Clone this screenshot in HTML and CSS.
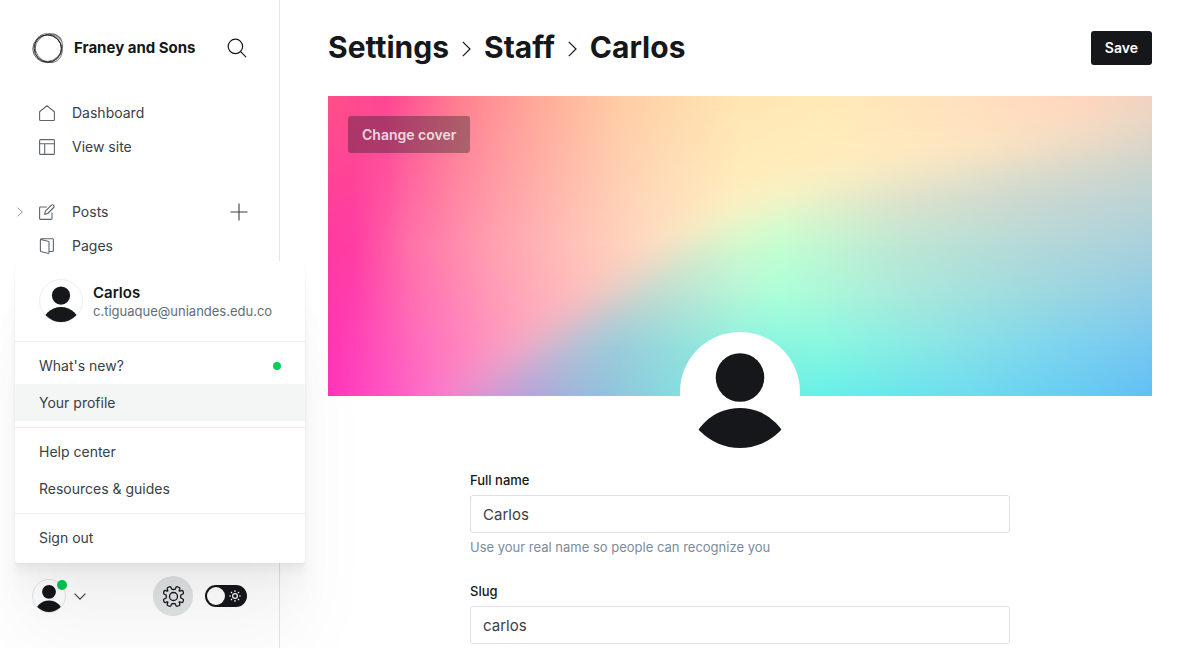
FILE: index.html
```html
<!DOCTYPE html>
<html lang="en">
<head>
<meta charset="utf-8">
<meta name="viewport" content="width=device-width, initial-scale=1">
<title>Settings - Staff - Carlos</title>
<link rel="stylesheet" href="styles.css">
</head>
<body>
<svg class="sprite" aria-hidden="true">
  <symbol id="person" viewBox="0 0 112 112">
    <clipPath id="person-clip"><circle cx="56" cy="56" r="56"/></clipPath>
    <g clip-path="url(#person-clip)" fill="#15171a"><circle cx="56" cy="41.5" r="24.3"/><circle cx="56" cy="122.8" r="50.8"/></g>
  </symbol>
</svg>
<div class="app">
  <aside class="sidebar">
    <header class="site">
      <svg class="site-logo" viewBox="0 0 32 32" fill="none" stroke="#222">
        <circle cx="15.700" cy="16.500" r="13.600" stroke-width=".9"/>
        <ellipse cx="15.200" cy="16.800" rx="14.400" ry="13.800" stroke-width=".9" opacity=".8"/>
        <ellipse cx="16.800" cy="15.600" rx="14.800" ry="12.800" transform="rotate(-45 16.800 15.600)" stroke-width=".8" opacity=".7"/>
        <ellipse cx="16.600" cy="16.200" rx="15.200" ry="13" transform="rotate(55 16.600 16.200)" stroke-width=".8" opacity=".7"/>
        <path d="M15 1.900Q24-.5 29.600 6.600L30 11Q25.500 3 15 1.900zM30.300 14Q30.500 24.500 20 30.200L16 31Q27.500 27 30.300 14zM2 14Q4 5 12 2.800L9 3Q2 7 1.600 16z" fill="#555" stroke="none" opacity=".5"/>
      </svg>
      <span class="site-name">Franey and Sons</span>
      <button class="icon-button" type="button" aria-label="Search">
        <svg class="icon-search" viewBox="0 0 20 20" fill="none" stroke="#15171a" stroke-width="1.2" stroke-linecap="round"><circle cx="8.4" cy="8.4" r="7.2"/><path d="M13.6 13.6 18.8 18.8"/></svg>
      </button>
    </header>
    <nav class="nav">
      <ul class="nav-group">
        <li class="nav-row"><a class="nav-link" href="#dashboard">
          <svg class="icon" viewBox="0 0 16 16"><path d="M.6 6.700 8 .8l7.400 5.900v8a.8.8 0 0 1-.8.8H1.400a.8.8 0 0 1-.8-.8z"/></svg>Dashboard</a></li>
        <li class="nav-row"><a class="nav-link" href="#site">
          <svg class="icon" viewBox="0 0 16 16"><rect x=".6" y=".6" width="14.8" height="14.8" rx="1"/><path d="M.6 4.800h14.800M5.700 4.800v10.600"/></svg>View site</a></li>
      </ul>
      <ul class="nav-group">
        <li class="nav-row">
          <button class="expand" type="button" aria-label="Expand posts"><svg class="icon-expand" viewBox="0 0 6 10"><path d="M.7.7 5.300 5 .7 9.300"/></svg></button>
          <a class="nav-link" href="#posts">
          <svg class="icon" viewBox="0 0 16 16"><path d="M7.500 3H1.400a.8.8 0 0 0-.8.8v10.800a.8.8 0 0 0 .8.8h10.800a.8.8 0 0 0 .8-.8V8.700"/><path d="m5.600 10.400.8-3.200 6-6a1.400 1.400 0 0 1 2 0l.3.300a1.400 1.400 0 0 1 0 2l-6 6z"/></svg>Posts</a>
          <button class="icon-button" type="button" aria-label="New post"><svg class="icon-add" viewBox="0 0 18 18"><path d="M9 .5v17M.5 9h17"/></svg></button></li>
        <li class="nav-row"><a class="nav-link" href="#pages">
          <svg class="icon" viewBox="0 0 16 16"><path d="M1.500 1.500 9 3.200a1.200 1.200 0 0 1 1 1.200v10a.9.9 0 0 1-1.100.9l-6.500-1.600a1.300 1.300 0 0 1-1-1.300V1.700c0-.6.400-1 1-1h11a1 1 0 0 1 1 1v10.800a1 1 0 0 1-1 1H10"/></svg>Pages</a></li>
      </ul>
    </nav>
    <footer class="sidebar-footer">
      <button class="account" type="button" aria-label="Account menu" aria-expanded="true">
        <span class="avatar avatar-small"><svg viewBox="0 0 112 112"><use href="#person"/></svg><span class="badge"></span></span>
        <svg class="icon-chevron" viewBox="0 0 12 7"><path d="M.6.6 6 6.200 11.400.6"/></svg>
      </button>
      <div class="tools">
        <a class="settings" href="#settings" aria-label="Settings">
          <svg class="icon-gear" viewBox="-10.500 -10.500 21 21"><circle r="4"/><path d="M-1.800-7.400-2.600-9.300Q-3.200-10-4-9.700L-5.700-9Q-6.500-8.500-6.300-7.600L-5.700-5.700Q-5.700-5.200-6.300-5.400L-8.200-6Q-9.200-6-9.500-5.200L-10-3.600Q-10-2.800-9.300-2.500L-7.400-1.500Q-7 0-7.400 1.500L-9.300 2.500Q-10 2.800-10 3.600L-9.500 5.200Q-9.200 6-8.200 6L-6.300 5.400Q-5.700 5.200-5.700 5.700L-6.300 7.600Q-6.500 8.500-5.700 9L-4 9.700Q-3.200 10-2.600 9.300L-1.800 7.400Q0 6.600 1.800 7.400L2.600 9.300Q3.200 10 4 9.700L5.700 9Q6.500 8.500 6.300 7.600L5.700 5.700Q5.700 5.200 6.300 5.400L8.200 6Q9.200 6 9.500 5.200L10 3.600Q10 2.800 9.300 2.500L7.400 1.500Q7 0 7.400-1.500L9.300-2.500Q10-2.800 10-3.600L9.500-5.200Q9.200-6 8.200-6L6.300-5.400Q5.700-5.200 5.700-5.700L6.300-7.600Q6.500-8.500 5.700-9L4-9.700Q3.200-10 2.600-9.300L1.800-7.400Q0-6.600-1.800-7.400z"/></svg>
        </a>
        <label class="night">
          <input class="night-input" type="checkbox" aria-label="Night mode">
          <svg class="icon-sun" viewBox="-6 -6 12 12"><circle r="2.400"/><path d="M0-5.800v1.800M0 5.800V4M-5.800 0H-4M5.800 0H4M-4.100-4.100l1.200 1.200M4.100 4.100 2.900 2.900M-4.100 4.100l1.200-1.200M4.100-4.100 2.900-2.900"/></svg>
        </label>
      </div>
      <div class="menu">
        <div class="menu-user">
          <span class="avatar avatar-medium"><svg viewBox="0 0 112 112"><use href="#person"/></svg></span>
          <div class="menu-identity"><strong class="menu-name">Carlos</strong><span class="menu-email">c.tiguaque@uniandes.edu.co</span></div>
        </div>
        <div class="menu-group">
          <a class="menu-item" href="#new">What's new?<span class="dot"></span></a>
          <a class="menu-item is-active" href="#profile">Your profile</a>
        </div>
        <div class="menu-group">
          <a class="menu-item" href="#help">Help center</a>
          <a class="menu-item" href="#resources">Resources &amp; guides</a>
        </div>
        <div class="menu-group">
          <a class="menu-item" href="#signout">Sign out</a>
        </div>
      </div>
    </footer>
  </aside>
  <main class="main">
    <header class="page-header">
      <h1 class="title">
        <a href="#settings">Settings</a>
        <svg class="crumb" viewBox="0 0 9 16"><path d="M.8.8 8 8 .8 15.200"/></svg>
        <a href="#staff">Staff</a>
        <svg class="crumb" viewBox="0 0 9 16"><path d="M.8.8 8 8 .8 15.200"/></svg>
        <span>Carlos</span>
      </h1>
      <button class="save" type="button">Save</button>
    </header>
    <section class="cover">
      <svg class="cover-art" viewBox="0 0 824 300" preserveAspectRatio="none" aria-hidden="true">
        <defs>
          <linearGradient id="w0"><stop offset="0" stop-color="#ff5088"/><stop offset=".07" stop-color="#ff4693"/><stop offset=".16" stop-color="#ff8090"/><stop offset=".25" stop-color="#ffa898"/><stop offset=".36" stop-color="#ffcfa5"/><stop offset=".5" stop-color="#ffe6b2"/><stop offset=".6" stop-color="#ffeab7"/><stop offset=".78" stop-color="#ffe0bf"/><stop offset=".92" stop-color="#ffd6bf"/><stop offset="1" stop-color="#f3d3c0"/></linearGradient>
          <linearGradient id="w1"><stop offset="0" stop-color="#ff3aa0"/><stop offset=".03" stop-color="#ff3ca3"/><stop offset=".1" stop-color="#ff72a8"/><stop offset=".2" stop-color="#ffa0b0"/><stop offset=".3" stop-color="#ffc2b8"/><stop offset=".4" stop-color="#ffdec2"/><stop offset=".5" stop-color="#fff2c4"/><stop offset="1" stop-color="#fff2c4"/></linearGradient>
          <linearGradient id="w2"><stop offset="0" stop-color="#ff35bb"/><stop offset=".06" stop-color="#ff50c3"/><stop offset=".13" stop-color="#ff72c8"/><stop offset=".25" stop-color="#ffa4c6"/><stop offset=".4" stop-color="#ffd0c8"/></linearGradient>
          <linearGradient id="c0"><stop offset=".5" stop-color="#fff0c0"/><stop offset=".62" stop-color="#feedc0"/><stop offset=".75" stop-color="#f8e4c4"/><stop offset=".9" stop-color="#e4dac8"/><stop offset="1" stop-color="#d6d4ca"/></linearGradient>
          <linearGradient id="c1"><stop offset=".45" stop-color="#f8f2c6"/><stop offset=".55" stop-color="#ebf6c8"/><stop offset=".7" stop-color="#dfe2cb"/><stop offset=".85" stop-color="#cdd8d0"/><stop offset="1" stop-color="#bed4d4"/></linearGradient>
          <linearGradient id="c2"><stop offset=".35" stop-color="#e0d4c6"/><stop offset=".5" stop-color="#d0f8ce"/><stop offset=".55" stop-color="#c4fed1"/><stop offset=".7" stop-color="#bde6d4"/><stop offset=".85" stop-color="#b4d9d8"/><stop offset="1" stop-color="#a8d0dd"/></linearGradient>
          <linearGradient id="c3"><stop offset=".28" stop-color="#d4bccc"/><stop offset=".4" stop-color="#bcdcd2"/><stop offset=".5" stop-color="#b2f6d8"/><stop offset=".55" stop-color="#aaffd9"/><stop offset=".7" stop-color="#a8e9dc"/><stop offset=".85" stop-color="#9cdae0"/><stop offset="1" stop-color="#90cde6"/></linearGradient>
          <linearGradient id="c4"><stop offset=".22" stop-color="#d2aed2"/><stop offset=".35" stop-color="#9cccd9"/><stop offset=".5" stop-color="#8cf2df"/><stop offset=".6" stop-color="#88f8e0"/><stop offset=".75" stop-color="#88e4e6"/><stop offset=".9" stop-color="#7cd2ef"/><stop offset="1" stop-color="#76c8f0"/></linearGradient>
          <linearGradient id="c5"><stop offset=".14" stop-color="#e68ad0"/><stop offset=".25" stop-color="#b2a6da"/><stop offset=".33" stop-color="#92c0dc"/><stop offset=".45" stop-color="#80e4e0"/><stop offset=".6" stop-color="#66f0e8"/><stop offset=".78" stop-color="#6edbef"/><stop offset="1" stop-color="#62bff4"/></linearGradient>
          <linearGradient id="fade" x2="0" y2="1"><stop offset="0" stop-color="#fff" stop-opacity="0"/><stop offset="1" stop-color="#fff"/></linearGradient>
          <filter id="soften" filterUnits="userSpaceOnUse" x="-200" y="-200" width="1300" height="800" color-interpolation-filters="sRGB"><feGaussianBlur stdDeviation="20"/></filter>
          <mask id="m-w1" maskUnits="userSpaceOnUse" x="0" y="0" width="824" height="300"><rect width="824" height="150" fill="url(#fade)"/><rect y="150" width="824" height="150" fill="#fff"/></mask>
          <mask id="m-w2" maskUnits="userSpaceOnUse" x="0" y="0" width="824" height="300"><rect y="150" width="824" height="150" fill="url(#fade)"/></mask>
          <mask id="m-c1" maskUnits="userSpaceOnUse" x="0" y="0" width="824" height="300"><rect y="50" width="824" height="50" fill="url(#fade)"/><rect y="100" width="824" height="200" fill="#fff"/></mask>
          <mask id="m-c2" maskUnits="userSpaceOnUse" x="0" y="0" width="824" height="300"><rect y="100" width="824" height="50" fill="url(#fade)"/><rect y="150" width="824" height="150" fill="#fff"/></mask>
          <mask id="m-c3" maskUnits="userSpaceOnUse" x="0" y="0" width="824" height="300"><rect y="150" width="824" height="50" fill="url(#fade)"/><rect y="200" width="824" height="100" fill="#fff"/></mask>
          <mask id="m-c4" maskUnits="userSpaceOnUse" x="0" y="0" width="824" height="300"><rect y="200" width="824" height="50" fill="url(#fade)"/><rect y="250" width="824" height="50" fill="#fff"/></mask>
          <mask id="m-c5" maskUnits="userSpaceOnUse" x="0" y="0" width="824" height="300"><rect y="250" width="824" height="50" fill="url(#fade)"/></mask>
          <mask id="m-cool" maskUnits="userSpaceOnUse" x="0" y="0" width="824" height="300"><path d="M30 380 124 304 290 192 405 112 510 76 824 26 1000 0V500H30z" fill="#fff" filter="url(#soften)"/></mask>
        </defs>
        <rect width="824" height="300" fill="url(#w0)"/>
        <rect width="824" height="300" fill="url(#w1)" mask="url(#m-w1)"/>
        <rect width="824" height="300" fill="url(#w2)" mask="url(#m-w2)"/>
        <g mask="url(#m-cool)">
          <rect width="824" height="300" fill="url(#c0)"/>
          <rect width="824" height="300" fill="url(#c1)" mask="url(#m-c1)"/>
          <rect width="824" height="300" fill="url(#c2)" mask="url(#m-c2)"/>
          <rect width="824" height="300" fill="url(#c3)" mask="url(#m-c3)"/>
          <rect width="824" height="300" fill="url(#c4)" mask="url(#m-c4)"/>
          <rect width="824" height="300" fill="url(#c5)" mask="url(#m-c5)"/>
        </g>
      </svg>
      <button class="change-cover" type="button">Change cover</button>
    </section>
    <span class="avatar avatar-large"><svg viewBox="0 0 112 112"><use href="#person"/></svg></span>
    <form class="form">
      <div class="field">
        <label class="label" for="name">Full name</label>
        <input class="input" id="name" type="text" value="Carlos" aria-describedby="name-help">
        <p class="help" id="name-help">Use your real name so people can recognize you</p>
      </div>
      <div class="field">
        <label class="label" for="slug">Slug</label>
        <input class="input" id="slug" type="text" value="carlos">
      </div>
    </form>
  </main>
</div>
</body>
</html>
```

FILE: styles.css
```css
*, *::before, *::after { box-sizing: border-box; }
body {
  margin: 0;
  background: #fff;
  color: #394047;
  font-family: Inter, "Liberation Sans", sans-serif;
  font-size: 15px;
  line-height: 20px;
}
a { color: inherit; text-decoration: none; }
button { border: 0; padding: 0; background: none; color: inherit; font: inherit; cursor: pointer; }
svg { display: block; }
.sprite { position: absolute; width: 0; height: 0; }

.app { display: flex; min-height: 100vh; }

/* Sidebar */
.sidebar {
  display: flex;
  flex-direction: column;
  flex: 0 0 280px;
  border-right: 1px solid #e3e6e8;
}
.site {
  display: flex;
  align-items: center;
  gap: 10px;
  padding: 32px 32px 0;
}
.site-logo { width: 32px; height: 32px; flex: none; }
.site-name { flex: 1; color: #15171a; font-size: 15px; font-weight: 700; white-space: nowrap; }
.icon-button { display: grid; place-items: center; }
.icon-search { width: 20px; height: 20px; }
.nav { display: grid; gap: 31px; padding-top: 32px; font-size: 14px; }
.nav-group { margin: 0; padding: 0; list-style: none; }
.nav-row { position: relative; display: flex; align-items: center; height: 34px; padding: 0 31px 0 39px; }
.nav-link { display: flex; flex: 1; align-items: center; gap: 17px; }
.icon { width: 16px; height: 16px; fill: none; stroke: #5d666f; stroke-width: 1.1; stroke-linejoin: round; stroke-linecap: round; }
.expand { position: absolute; left: 17px; }
.icon-expand { width: 6px; height: 10px; fill: none; stroke: #8b98a3; }
.icon-add { width: 18px; height: 18px; fill: none; stroke: #394047; stroke-width: 1.1; }

.sidebar-footer {
  position: relative;
  display: flex;
  align-items: center;
  justify-content: space-between;
  margin-top: auto;
  padding: 0 32px 32px;
}
.account { display: flex; align-items: center; gap: 8px; }
.icon-chevron { width: 12px; height: 7px; fill: none; stroke: #394047; stroke-width: 1.1; }
.tools { display: flex; align-items: center; gap: 12px; }
.settings { display: grid; place-items: center; width: 40px; height: 40px; border-radius: 50%; background: #e1e5e6; }
.icon-gear { width: 21px; height: 21px; fill: none; stroke: #15171a; stroke-width: 1.3; stroke-linejoin: round; }
.night { position: relative; display: block; width: 42px; height: 22px; cursor: pointer; }
.night-input { display: flex; align-items: center; width: 100%; height: 100%; margin: 0; padding: 2px; border-radius: 11px; background: #15171a; appearance: none; cursor: pointer; }
.night-input::before { content: ""; width: 18px; height: 18px; border-radius: 50%; background: #fff; }
.icon-sun { position: absolute; top: 5px; right: 6px; width: 12px; height: 12px; fill: none; stroke: #fff; stroke-width: 1.2; pointer-events: none; }

.avatar { position: relative; display: block; flex: none; border-radius: 50%; background: #fff; }
.avatar svg { width: 100%; height: 100%; }
.avatar-small { width: 34px; height: 34px; border: 1px solid #e3e6e8; }
.avatar-medium { width: 44px; height: 44px; border: 1px solid #eceef0; }
.avatar-large { width: 120px; height: 120px; margin: -64px auto 0; padding: 4px; }
.badge { position: absolute; top: 0; right: -2px; width: 10px; height: 10px; border-radius: 50%; background: #00c853; }

/* Account menu */
.menu {
  position: absolute;
  z-index: 2;
  bottom: 85px;
  left: 15px;
  width: 290px;
  padding-bottom: 1px;
  border-radius: 3px;
  background: #fff;
  box-shadow:
    0 0 1px rgba(0, 0, 0, .1),
    0 3px 3px rgba(0, 0, 0, .02),
    0 7px 6px rgba(0, 0, 0, .02),
    0 12px 10px rgba(0, 0, 0, .02),
    0 22px 18px rgba(0, 0, 0, .02),
    0 42px 34px rgba(0, 0, 0, .02),
    0 80px 80px rgba(0, 0, 0, .04);
}
.menu-user { display: flex; align-items: center; gap: 10px; padding: 18px 24px; }
.menu-identity { display: grid; }
.menu-name { color: #15171a; font-size: 15px; font-weight: 600; line-height: 19px; }
.menu-email { color: #626d79; font-size: 13px; line-height: 18px; }
.menu-group { padding: 5px 0 6px; border-top: 1px solid #ebedee; }
.menu-item { display: flex; align-items: center; justify-content: space-between; height: 37px; padding: 0 24px; font-size: 14px; }
.menu-item.is-active { background: #f4f5f5; }
.dot { width: 8px; height: 8px; border-radius: 50%; background: #00d058; }

/* Page */
.main { flex: 1; min-width: 0; padding: 0 48px 4px; }
.page-header { display: flex; align-items: center; justify-content: space-between; height: 96px; }
.title { display: flex; align-items: center; gap: 13px; margin: 0; padding-bottom: 2px; color: #15171a; font-size: 30px; font-weight: 700; line-height: 36px; }
.crumb { width: 9px; height: 16px; margin-top: 4px; fill: none; stroke: #15171a; stroke-width: 1.2; }
.save { height: 34px; padding: 0 14px; border-radius: 3px; background: #15171a; color: #fff; font-size: 14px; font-weight: 600; }
.cover { position: relative; height: 300px; padding: 20px; }
.cover-art { position: absolute; inset: 0; width: 100%; height: 100%; }
.change-cover { position: relative; height: 37px; padding: 0 14px; border-radius: 3px; background: rgba(21, 23, 26, .35); color: rgba(255, 255, 255, .8); font-size: 14px; font-weight: 600; }
.form { display: grid; gap: 24px; max-width: 540px; margin: 0 auto; padding-top: 18px; }
.label { display: block; margin-bottom: 5px; color: #15171a; font-size: 13px; font-weight: 500; }
.input { display: block; width: 100%; height: 38px; padding: 0 12px; border: 1px solid #dde1e5; border-radius: 3px; background: #fff; color: #394047; font: inherit; }
.help { margin: 4px 0 0; color: #7c8b9a; font-size: 13px; }
```
